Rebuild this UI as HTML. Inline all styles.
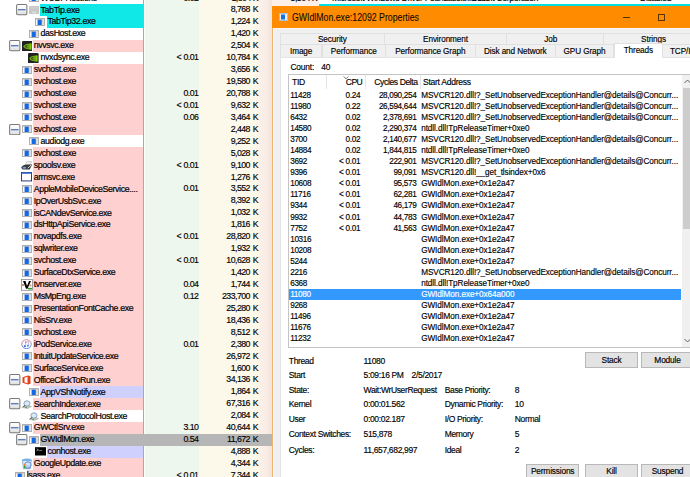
<!DOCTYPE html><html><head><meta charset="utf-8"><style>
html,body{margin:0;padding:0}
body{width:690px;height:477px;overflow:hidden;position:relative;background:#fff;font-family:'Liberation Sans', sans-serif;color:#000}
.a{position:absolute}
svg{display:block}
.t{position:absolute;white-space:nowrap;line-height:1;-webkit-text-stroke:0.15px currentColor}

</style></head><body>
<div class="a" style="left:143.5px;top:0;width:55.5px;height:477px;background:#eef7ee"></div>
<div class="a" style="left:143px;top:0;width:1px;height:477px;background:#a9a9a9"></div>
<div class="a" style="left:144px;top:0;width:1px;height:477px;background:#fbfffb"></div>
<div class="a" style="left:199px;top:0;width:60px;height:477px;background:#fdf9ea"></div>
<div class="a" style="left:259px;top:0;width:60px;height:477px;background:linear-gradient(to right,#fcf0e8 0px,#f9ece4 8px,#f1e3dc 13px,#fcf0e8 13px)"></div>
<div class="a" style="left:28.5px;top:-5.94px;line-height:0"><svg preserveAspectRatio="none" width="10" height="8" viewBox="0 0 10 8"><rect x="0.5" y="0.5" width="9" height="7" fill="#f8f8f8" stroke="#b0b0b0"/><rect x="1" y="1" width="8" height="0.8" fill="#dccab8"/><rect x="2.6" y="1.6" width="4.2" height="5.4" fill="#1468e0"/><rect x="7.2" y="1.8" width="1.4" height="5" fill="#cfcfcf"/></svg></div>
<div class="t" style="left:40.50px;top:-5.59px;font-size:8.8px;color:#000;letter-spacing:-0.38px;">WUDFHost.exe</div>
<div class="t" style="right:491.65px;top:-5.59px;font-size:8.8px;color:#000;text-align:right;letter-spacing:-0.55px;">0.02</div>
<div class="t" style="right:432.05px;top:-5.59px;font-size:8.8px;color:#000;text-align:right;letter-spacing:-0.55px;">1,804 K</div>
<div class="a" style="left:40.30px;top:4px;width:102.70px;height:12px;background:#10e8e8"></div>
<div class="a" style="left:16.10px;top:4.30px;line-height:0"><svg width="11.5" height="11.4" viewBox="0 0 12 12"><defs><linearGradient id="bg" x1="0" y1="0" x2="0" y2="1"><stop offset="0" stop-color="#ffffff"/><stop offset="0.5" stop-color="#f4f4f4"/><stop offset="1" stop-color="#dcdcdc"/></linearGradient></defs><rect x="0.6" y="0.6" width="10.8" height="10.8" rx="1.2" fill="url(#bg)" stroke="#7a7a7a" stroke-width="1.1"/><rect x="2" y="5.4" width="8" height="1.3" fill="#4a6fb0"/></svg></div>
<div class="a" style="left:28.70px;top:6.10px;line-height:0"><svg preserveAspectRatio="none" width="10.3" height="7.9" viewBox="0 0 10 8"><rect x="0" y="0" width="10" height="8" fill="#c4c4c4"/><rect x="0.8" y="0.8" width="8.4" height="2" fill="#d0d0d0"/><rect x="0.8" y="3.4" width="8.4" height="2" fill="#cacaca"/><rect x="3" y="5.8" width="4" height="1.4" fill="#e0e0e0"/></svg></div>
<div class="t" style="left:40.60px;top:5.55px;font-size:8.8px;color:#000;letter-spacing:-0.38px;-webkit-text-stroke:0.2px #000">TabTip.exe</div>
<div class="t" style="right:432.05px;top:5.35px;font-size:8.8px;color:#000;text-align:right;letter-spacing:-0.55px;">8,768 <span style="margin-left:0.8px">K</span></div>
<div class="a" style="left:47.20px;top:16px;width:95.80px;height:12px;background:#10e8e8"></div>
<div class="a" style="left:35.40px;top:17.94px;line-height:0"><svg preserveAspectRatio="none" width="10" height="8" viewBox="0 0 10 8"><rect x="0.5" y="0.5" width="9" height="7" fill="#f8f8f8" stroke="#b0b0b0"/><rect x="1" y="1" width="8" height="0.8" fill="#dccab8"/><rect x="2.6" y="1.6" width="4.2" height="5.4" fill="#1468e0"/><rect x="7.2" y="1.8" width="1.4" height="5" fill="#cfcfcf"/></svg></div>
<div class="t" style="left:47.50px;top:17.49px;font-size:8.8px;color:#000;letter-spacing:-0.38px;-webkit-text-stroke:0.2px #000">TabTip32.exe</div>
<div class="t" style="right:432.05px;top:17.29px;font-size:8.8px;color:#000;text-align:right;letter-spacing:-0.55px;">1,224 <span style="margin-left:0.8px">K</span></div>
<div class="a" style="left:28.50px;top:29.88px;line-height:0"><svg preserveAspectRatio="none" width="10" height="8" viewBox="0 0 10 8"><rect x="0.5" y="0.5" width="9" height="7" fill="#f8f8f8" stroke="#b0b0b0"/><rect x="1" y="1" width="8" height="0.8" fill="#dccab8"/><rect x="2.6" y="1.6" width="4.2" height="5.4" fill="#1468e0"/><rect x="7.2" y="1.8" width="1.4" height="5" fill="#cfcfcf"/></svg></div>
<div class="t" style="left:40.60px;top:29.43px;font-size:8.8px;color:#000;letter-spacing:-0.38px;-webkit-text-stroke:0.2px #000">dasHost.exe</div>
<div class="t" style="right:432.05px;top:29.23px;font-size:8.8px;color:#000;text-align:right;letter-spacing:-0.55px;">1,420 <span style="margin-left:0.8px">K</span></div>
<div class="a" style="left:33.40px;top:40px;width:109.60px;height:12px;background:#ffd0d0"></div>
<div class="a" style="left:9.20px;top:40.12px;line-height:0"><svg width="11.5" height="11.4" viewBox="0 0 12 12"><defs><linearGradient id="bg" x1="0" y1="0" x2="0" y2="1"><stop offset="0" stop-color="#ffffff"/><stop offset="0.5" stop-color="#f4f4f4"/><stop offset="1" stop-color="#dcdcdc"/></linearGradient></defs><rect x="0.6" y="0.6" width="10.8" height="10.8" rx="1.2" fill="url(#bg)" stroke="#7a7a7a" stroke-width="1.1"/><rect x="2" y="5.4" width="8" height="1.3" fill="#4a6fb0"/></svg></div>
<div class="a" style="left:21.50px;top:40.62px;line-height:0"><svg preserveAspectRatio="none" width="10.6" height="10.8" viewBox="0 0 11 11"><rect x="0" y="0" width="11" height="11" rx="1.2" fill="#222"/><path d="M1.2 5.6 C2.5 3.3 5 2.4 9.8 2.6 L9.8 8.6 C5 8.8 2.5 7.8 1.2 5.6Z" fill="#6aa816"/><path d="M3 5.6 C4 4.2 5.5 4 7 4.6 C6 4.4 4.8 4.8 4.4 5.6 C4.8 6.4 6 6.8 7 6.6 C5.5 7.2 4 7 3 5.6Z" fill="#2a3a10"/><path d="M8.2 2.6 L9.8 2.6 L9.8 8.6 L8.2 8.6Z" fill="#86c800"/></svg></div>
<div class="t" style="left:33.70px;top:41.37px;font-size:8.8px;color:#000;letter-spacing:-0.38px;-webkit-text-stroke:0.2px #000">nvvsvc.exe</div>
<div class="t" style="right:432.05px;top:41.17px;font-size:8.8px;color:#000;text-align:right;letter-spacing:-0.55px;">2,504 <span style="margin-left:0.8px">K</span></div>
<div class="a" style="left:28.40px;top:52.56px;line-height:0"><svg preserveAspectRatio="none" width="10.6" height="10.8" viewBox="0 0 11 11"><rect x="0" y="0" width="11" height="11" rx="1.2" fill="#222"/><path d="M1.2 5.6 C2.5 3.3 5 2.4 9.8 2.6 L9.8 8.6 C5 8.8 2.5 7.8 1.2 5.6Z" fill="#6aa816"/><path d="M3 5.6 C4 4.2 5.5 4 7 4.6 C6 4.4 4.8 4.8 4.4 5.6 C4.8 6.4 6 6.8 7 6.6 C5.5 7.2 4 7 3 5.6Z" fill="#2a3a10"/><path d="M8.2 2.6 L9.8 2.6 L9.8 8.6 L8.2 8.6Z" fill="#86c800"/></svg></div>
<div class="t" style="left:40.60px;top:53.31px;font-size:8.8px;color:#000;letter-spacing:-0.38px;-webkit-text-stroke:0.2px #000">nvxdsync.exe</div>
<div class="t" style="right:491.65px;top:53.11px;font-size:8.8px;color:#000;text-align:right;letter-spacing:-0.55px;">&lt;<span style="margin-left:2.4px"></span>0.01</div>
<div class="t" style="right:432.05px;top:53.11px;font-size:8.8px;color:#000;text-align:right;letter-spacing:-0.55px;">10,784 <span style="margin-left:0.8px">K</span></div>
<div class="a" style="left:33.40px;top:64px;width:109.60px;height:12px;background:#ffd0d0"></div>
<div class="a" style="left:21.60px;top:65.70px;line-height:0"><svg preserveAspectRatio="none" width="10" height="8" viewBox="0 0 10 8"><rect x="0.5" y="0.5" width="9" height="7" fill="#f8f8f8" stroke="#b0b0b0"/><rect x="1" y="1" width="8" height="0.8" fill="#dccab8"/><rect x="2.6" y="1.6" width="4.2" height="5.4" fill="#1468e0"/><rect x="7.2" y="1.8" width="1.4" height="5" fill="#cfcfcf"/></svg></div>
<div class="t" style="left:33.70px;top:65.25px;font-size:8.8px;color:#000;letter-spacing:-0.38px;-webkit-text-stroke:0.2px #000">svchost.exe</div>
<div class="t" style="right:432.05px;top:65.05px;font-size:8.8px;color:#000;text-align:right;letter-spacing:-0.55px;">3,656 <span style="margin-left:0.8px">K</span></div>
<div class="a" style="left:33.40px;top:76px;width:109.60px;height:12px;background:#ffd0d0"></div>
<div class="a" style="left:21.60px;top:77.64px;line-height:0"><svg preserveAspectRatio="none" width="10" height="8" viewBox="0 0 10 8"><rect x="0.5" y="0.5" width="9" height="7" fill="#f8f8f8" stroke="#b0b0b0"/><rect x="1" y="1" width="8" height="0.8" fill="#dccab8"/><rect x="2.6" y="1.6" width="4.2" height="5.4" fill="#1468e0"/><rect x="7.2" y="1.8" width="1.4" height="5" fill="#cfcfcf"/></svg></div>
<div class="t" style="left:33.70px;top:77.19px;font-size:8.8px;color:#000;letter-spacing:-0.38px;-webkit-text-stroke:0.2px #000">svchost.exe</div>
<div class="t" style="right:432.05px;top:76.99px;font-size:8.8px;color:#000;text-align:right;letter-spacing:-0.55px;">19,580 <span style="margin-left:0.8px">K</span></div>
<div class="a" style="left:33.40px;top:88px;width:109.60px;height:12px;background:#ffd0d0"></div>
<div class="a" style="left:21.60px;top:89.58px;line-height:0"><svg preserveAspectRatio="none" width="10" height="8" viewBox="0 0 10 8"><rect x="0.5" y="0.5" width="9" height="7" fill="#f8f8f8" stroke="#b0b0b0"/><rect x="1" y="1" width="8" height="0.8" fill="#dccab8"/><rect x="2.6" y="1.6" width="4.2" height="5.4" fill="#1468e0"/><rect x="7.2" y="1.8" width="1.4" height="5" fill="#cfcfcf"/></svg></div>
<div class="t" style="left:33.70px;top:89.13px;font-size:8.8px;color:#000;letter-spacing:-0.38px;-webkit-text-stroke:0.2px #000">svchost.exe</div>
<div class="t" style="right:491.65px;top:88.93px;font-size:8.8px;color:#000;text-align:right;letter-spacing:-0.55px;">0.01</div>
<div class="t" style="right:432.05px;top:88.93px;font-size:8.8px;color:#000;text-align:right;letter-spacing:-0.55px;">20,788 <span style="margin-left:0.8px">K</span></div>
<div class="a" style="left:33.40px;top:100px;width:109.60px;height:11px;background:#ffd0d0"></div>
<div class="a" style="left:21.60px;top:101.52px;line-height:0"><svg preserveAspectRatio="none" width="10" height="8" viewBox="0 0 10 8"><rect x="0.5" y="0.5" width="9" height="7" fill="#f8f8f8" stroke="#b0b0b0"/><rect x="1" y="1" width="8" height="0.8" fill="#dccab8"/><rect x="2.6" y="1.6" width="4.2" height="5.4" fill="#1468e0"/><rect x="7.2" y="1.8" width="1.4" height="5" fill="#cfcfcf"/></svg></div>
<div class="t" style="left:33.70px;top:101.07px;font-size:8.8px;color:#000;letter-spacing:-0.38px;-webkit-text-stroke:0.2px #000">svchost.exe</div>
<div class="t" style="right:491.65px;top:100.87px;font-size:8.8px;color:#000;text-align:right;letter-spacing:-0.55px;">&lt;<span style="margin-left:2.4px"></span>0.01</div>
<div class="t" style="right:432.05px;top:100.87px;font-size:8.8px;color:#000;text-align:right;letter-spacing:-0.55px;">9,632 <span style="margin-left:0.8px">K</span></div>
<div class="a" style="left:33.40px;top:111px;width:109.60px;height:12px;background:#ffd0d0"></div>
<div class="a" style="left:21.60px;top:113.46px;line-height:0"><svg preserveAspectRatio="none" width="10" height="8" viewBox="0 0 10 8"><rect x="0.5" y="0.5" width="9" height="7" fill="#f8f8f8" stroke="#b0b0b0"/><rect x="1" y="1" width="8" height="0.8" fill="#dccab8"/><rect x="2.6" y="1.6" width="4.2" height="5.4" fill="#1468e0"/><rect x="7.2" y="1.8" width="1.4" height="5" fill="#cfcfcf"/></svg></div>
<div class="t" style="left:33.70px;top:113.01px;font-size:8.8px;color:#000;letter-spacing:-0.38px;-webkit-text-stroke:0.2px #000">svchost.exe</div>
<div class="t" style="right:491.65px;top:112.81px;font-size:8.8px;color:#000;text-align:right;letter-spacing:-0.55px;">0.06</div>
<div class="t" style="right:432.05px;top:112.81px;font-size:8.8px;color:#000;text-align:right;letter-spacing:-0.55px;">3,464 <span style="margin-left:0.8px">K</span></div>
<div class="a" style="left:33.40px;top:123px;width:109.60px;height:12px;background:#ffd0d0"></div>
<div class="a" style="left:9.20px;top:123.70px;line-height:0"><svg width="11.5" height="11.4" viewBox="0 0 12 12"><defs><linearGradient id="bg" x1="0" y1="0" x2="0" y2="1"><stop offset="0" stop-color="#ffffff"/><stop offset="0.5" stop-color="#f4f4f4"/><stop offset="1" stop-color="#dcdcdc"/></linearGradient></defs><rect x="0.6" y="0.6" width="10.8" height="10.8" rx="1.2" fill="url(#bg)" stroke="#7a7a7a" stroke-width="1.1"/><rect x="2" y="5.4" width="8" height="1.3" fill="#4a6fb0"/></svg></div>
<div class="a" style="left:21.60px;top:125.40px;line-height:0"><svg preserveAspectRatio="none" width="10" height="8" viewBox="0 0 10 8"><rect x="0.5" y="0.5" width="9" height="7" fill="#f8f8f8" stroke="#b0b0b0"/><rect x="1" y="1" width="8" height="0.8" fill="#dccab8"/><rect x="2.6" y="1.6" width="4.2" height="5.4" fill="#1468e0"/><rect x="7.2" y="1.8" width="1.4" height="5" fill="#cfcfcf"/></svg></div>
<div class="t" style="left:33.70px;top:124.95px;font-size:8.8px;color:#000;letter-spacing:-0.38px;-webkit-text-stroke:0.2px #000">svchost.exe</div>
<div class="t" style="right:432.05px;top:124.75px;font-size:8.8px;color:#000;text-align:right;letter-spacing:-0.55px;">2,448 <span style="margin-left:0.8px">K</span></div>
<div class="a" style="left:28.50px;top:137.34px;line-height:0"><svg preserveAspectRatio="none" width="10" height="8" viewBox="0 0 10 8"><rect x="0.5" y="0.5" width="9" height="7" fill="#f8f8f8" stroke="#b0b0b0"/><rect x="1" y="1" width="8" height="0.8" fill="#dccab8"/><rect x="2.6" y="1.6" width="4.2" height="5.4" fill="#1468e0"/><rect x="7.2" y="1.8" width="1.4" height="5" fill="#cfcfcf"/></svg></div>
<div class="t" style="left:40.60px;top:136.89px;font-size:8.8px;color:#000;letter-spacing:-0.38px;-webkit-text-stroke:0.2px #000">audiodg.exe</div>
<div class="t" style="right:432.05px;top:136.69px;font-size:8.8px;color:#000;text-align:right;letter-spacing:-0.55px;">9,252 <span style="margin-left:0.8px">K</span></div>
<div class="a" style="left:33.40px;top:147px;width:109.60px;height:12px;background:#ffd0d0"></div>
<div class="a" style="left:21.60px;top:149.28px;line-height:0"><svg preserveAspectRatio="none" width="10" height="8" viewBox="0 0 10 8"><rect x="0.5" y="0.5" width="9" height="7" fill="#f8f8f8" stroke="#b0b0b0"/><rect x="1" y="1" width="8" height="0.8" fill="#dccab8"/><rect x="2.6" y="1.6" width="4.2" height="5.4" fill="#1468e0"/><rect x="7.2" y="1.8" width="1.4" height="5" fill="#cfcfcf"/></svg></div>
<div class="t" style="left:33.70px;top:148.83px;font-size:8.8px;color:#000;letter-spacing:-0.38px;-webkit-text-stroke:0.2px #000">svchost.exe</div>
<div class="t" style="right:432.05px;top:148.63px;font-size:8.8px;color:#000;text-align:right;letter-spacing:-0.55px;">5,028 <span style="margin-left:0.8px">K</span></div>
<div class="a" style="left:33.40px;top:159px;width:109.60px;height:12px;background:#ffd0d0"></div>
<div class="a" style="left:21.00px;top:161.02px;line-height:0"><svg preserveAspectRatio="none" width="11.6" height="9" viewBox="0 0 12 10"><path d="M6 0.5 L11 0.5 L9 5 L4 5Z" fill="#f0f0f0" stroke="#b0b0b0" stroke-width="0.6"/><path d="M0.5 7 Q2 4 6 4 L11.5 4 L9 9.5 L2 9.5 Q0.5 9 0.5 7Z" fill="#3a3a3a"/><ellipse cx="3.5" cy="7.5" rx="2" ry="1.2" fill="#6aa0e0"/><path d="M7 8 L10.5 4.5" stroke="#e0e0e0" stroke-width="1"/></svg></div>
<div class="t" style="left:33.70px;top:160.77px;font-size:8.8px;color:#000;letter-spacing:-0.38px;-webkit-text-stroke:0.2px #000">spoolsv.exe</div>
<div class="t" style="right:491.65px;top:160.57px;font-size:8.8px;color:#000;text-align:right;letter-spacing:-0.55px;">&lt;<span style="margin-left:2.4px"></span>0.01</div>
<div class="t" style="right:432.05px;top:160.57px;font-size:8.8px;color:#000;text-align:right;letter-spacing:-0.55px;">9,100 <span style="margin-left:0.8px">K</span></div>
<div class="a" style="left:33.40px;top:171px;width:109.60px;height:12px;background:#ffd0d0"></div>
<div class="a" style="left:21.10px;top:172.26px;line-height:0"><svg preserveAspectRatio="none" width="11" height="9.4" viewBox="0 0 12 10"><rect x="0.5" y="0.5" width="11" height="9" fill="#fff" stroke="#1c2f6e" stroke-width="1"/><rect x="0.5" y="0.5" width="11" height="1.5" fill="#3d78d8"/></svg></div>
<div class="t" style="left:33.70px;top:172.71px;font-size:8.8px;color:#000;letter-spacing:-0.38px;-webkit-text-stroke:0.2px #000">armsvc.exe</div>
<div class="t" style="right:432.05px;top:172.51px;font-size:8.8px;color:#000;text-align:right;letter-spacing:-0.55px;">1,276 <span style="margin-left:0.8px">K</span></div>
<div class="a" style="left:33.40px;top:183px;width:109.60px;height:12px;background:#ffd0d0"></div>
<div class="a" style="left:21.60px;top:185.10px;line-height:0"><svg preserveAspectRatio="none" width="10" height="8" viewBox="0 0 10 8"><rect x="0.5" y="0.5" width="9" height="7" fill="#f8f8f8" stroke="#b0b0b0"/><rect x="1" y="1" width="8" height="0.8" fill="#dccab8"/><rect x="2.6" y="1.6" width="4.2" height="5.4" fill="#1468e0"/><rect x="7.2" y="1.8" width="1.4" height="5" fill="#cfcfcf"/></svg></div>
<div class="t" style="left:33.70px;top:184.65px;font-size:8.8px;color:#000;letter-spacing:-0.38px;-webkit-text-stroke:0.2px #000">AppleMobileDeviceService....</div>
<div class="t" style="right:491.65px;top:184.45px;font-size:8.8px;color:#000;text-align:right;letter-spacing:-0.55px;">0.01</div>
<div class="t" style="right:432.05px;top:184.45px;font-size:8.8px;color:#000;text-align:right;letter-spacing:-0.55px;">3,552 <span style="margin-left:0.8px">K</span></div>
<div class="a" style="left:33.40px;top:195px;width:109.60px;height:12px;background:#ffd0d0"></div>
<div class="a" style="left:21.60px;top:197.04px;line-height:0"><svg preserveAspectRatio="none" width="10" height="8" viewBox="0 0 10 8"><rect x="0.5" y="0.5" width="9" height="7" fill="#f8f8f8" stroke="#b0b0b0"/><rect x="1" y="1" width="8" height="0.8" fill="#dccab8"/><rect x="2.6" y="1.6" width="4.2" height="5.4" fill="#1468e0"/><rect x="7.2" y="1.8" width="1.4" height="5" fill="#cfcfcf"/></svg></div>
<div class="t" style="left:33.70px;top:196.59px;font-size:8.8px;color:#000;letter-spacing:-0.38px;-webkit-text-stroke:0.2px #000">IpOverUsbSvc.exe</div>
<div class="t" style="right:432.05px;top:196.39px;font-size:8.8px;color:#000;text-align:right;letter-spacing:-0.55px;">8,392 <span style="margin-left:0.8px">K</span></div>
<div class="a" style="left:33.40px;top:207px;width:109.60px;height:12px;background:#ffd0d0"></div>
<div class="a" style="left:21.60px;top:208.98px;line-height:0"><svg preserveAspectRatio="none" width="10" height="8" viewBox="0 0 10 8"><rect x="0.5" y="0.5" width="9" height="7" fill="#f8f8f8" stroke="#b0b0b0"/><rect x="1" y="1" width="8" height="0.8" fill="#dccab8"/><rect x="2.6" y="1.6" width="4.2" height="5.4" fill="#1468e0"/><rect x="7.2" y="1.8" width="1.4" height="5" fill="#cfcfcf"/></svg></div>
<div class="t" style="left:33.70px;top:208.53px;font-size:8.8px;color:#000;letter-spacing:-0.38px;-webkit-text-stroke:0.2px #000">isCANdevService.exe</div>
<div class="t" style="right:432.05px;top:208.33px;font-size:8.8px;color:#000;text-align:right;letter-spacing:-0.55px;">1,032 <span style="margin-left:0.8px">K</span></div>
<div class="a" style="left:33.40px;top:219px;width:109.60px;height:12px;background:#ffd0d0"></div>
<div class="a" style="left:21.60px;top:220.92px;line-height:0"><svg preserveAspectRatio="none" width="10" height="8" viewBox="0 0 10 8"><rect x="0.5" y="0.5" width="9" height="7" fill="#f8f8f8" stroke="#b0b0b0"/><rect x="1" y="1" width="8" height="0.8" fill="#dccab8"/><rect x="2.6" y="1.6" width="4.2" height="5.4" fill="#1468e0"/><rect x="7.2" y="1.8" width="1.4" height="5" fill="#cfcfcf"/></svg></div>
<div class="t" style="left:33.70px;top:220.47px;font-size:8.8px;color:#000;letter-spacing:-0.38px;-webkit-text-stroke:0.2px #000">dsHttpApiService.exe</div>
<div class="t" style="right:432.05px;top:220.27px;font-size:8.8px;color:#000;text-align:right;letter-spacing:-0.55px;">1,816 <span style="margin-left:0.8px">K</span></div>
<div class="a" style="left:33.40px;top:231px;width:109.60px;height:12px;background:#ffd0d0"></div>
<div class="a" style="left:21.60px;top:232.86px;line-height:0"><svg preserveAspectRatio="none" width="10" height="8" viewBox="0 0 10 8"><rect x="0.5" y="0.5" width="9" height="7" fill="#f8f8f8" stroke="#b0b0b0"/><rect x="1" y="1" width="8" height="0.8" fill="#dccab8"/><rect x="2.6" y="1.6" width="4.2" height="5.4" fill="#1468e0"/><rect x="7.2" y="1.8" width="1.4" height="5" fill="#cfcfcf"/></svg></div>
<div class="t" style="left:33.70px;top:232.41px;font-size:8.8px;color:#000;letter-spacing:-0.38px;-webkit-text-stroke:0.2px #000">novapdfs.exe</div>
<div class="t" style="right:491.65px;top:232.21px;font-size:8.8px;color:#000;text-align:right;letter-spacing:-0.55px;">&lt;<span style="margin-left:2.4px"></span>0.01</div>
<div class="t" style="right:432.05px;top:232.21px;font-size:8.8px;color:#000;text-align:right;letter-spacing:-0.55px;">28,820 <span style="margin-left:0.8px">K</span></div>
<div class="a" style="left:33.40px;top:243px;width:109.60px;height:12px;background:#ffd0d0"></div>
<div class="a" style="left:21.60px;top:244.80px;line-height:0"><svg preserveAspectRatio="none" width="10" height="8" viewBox="0 0 10 8"><rect x="0.5" y="0.5" width="9" height="7" fill="#f8f8f8" stroke="#b0b0b0"/><rect x="1" y="1" width="8" height="0.8" fill="#dccab8"/><rect x="2.6" y="1.6" width="4.2" height="5.4" fill="#1468e0"/><rect x="7.2" y="1.8" width="1.4" height="5" fill="#cfcfcf"/></svg></div>
<div class="t" style="left:33.70px;top:244.35px;font-size:8.8px;color:#000;letter-spacing:-0.38px;-webkit-text-stroke:0.2px #000">sqlwriter.exe</div>
<div class="t" style="right:432.05px;top:244.15px;font-size:8.8px;color:#000;text-align:right;letter-spacing:-0.55px;">1,932 <span style="margin-left:0.8px">K</span></div>
<div class="a" style="left:33.40px;top:255px;width:109.60px;height:12px;background:#ffd0d0"></div>
<div class="a" style="left:21.60px;top:256.74px;line-height:0"><svg preserveAspectRatio="none" width="10" height="8" viewBox="0 0 10 8"><rect x="0.5" y="0.5" width="9" height="7" fill="#f8f8f8" stroke="#b0b0b0"/><rect x="1" y="1" width="8" height="0.8" fill="#dccab8"/><rect x="2.6" y="1.6" width="4.2" height="5.4" fill="#1468e0"/><rect x="7.2" y="1.8" width="1.4" height="5" fill="#cfcfcf"/></svg></div>
<div class="t" style="left:33.70px;top:256.29px;font-size:8.8px;color:#000;letter-spacing:-0.38px;-webkit-text-stroke:0.2px #000">svchost.exe</div>
<div class="t" style="right:491.65px;top:256.09px;font-size:8.8px;color:#000;text-align:right;letter-spacing:-0.55px;">&lt;<span style="margin-left:2.4px"></span>0.01</div>
<div class="t" style="right:432.05px;top:256.09px;font-size:8.8px;color:#000;text-align:right;letter-spacing:-0.55px;">10,628 <span style="margin-left:0.8px">K</span></div>
<div class="a" style="left:33.40px;top:267px;width:109.60px;height:12px;background:#ffd0d0"></div>
<div class="a" style="left:21.60px;top:268.68px;line-height:0"><svg preserveAspectRatio="none" width="10" height="8" viewBox="0 0 10 8"><rect x="0.5" y="0.5" width="9" height="7" fill="#f8f8f8" stroke="#b0b0b0"/><rect x="1" y="1" width="8" height="0.8" fill="#dccab8"/><rect x="2.6" y="1.6" width="4.2" height="5.4" fill="#1468e0"/><rect x="7.2" y="1.8" width="1.4" height="5" fill="#cfcfcf"/></svg></div>
<div class="t" style="left:33.70px;top:268.23px;font-size:8.8px;color:#000;letter-spacing:-0.38px;-webkit-text-stroke:0.2px #000">SurfaceDtxService.exe</div>
<div class="t" style="right:432.05px;top:268.03px;font-size:8.8px;color:#000;text-align:right;letter-spacing:-0.55px;">1,420 <span style="margin-left:0.8px">K</span></div>
<div class="a" style="left:33.40px;top:279px;width:109.60px;height:12px;background:#ffd0d0"></div>
<div class="a" style="left:20.70px;top:278.72px;line-height:0"><svg preserveAspectRatio="none" width="12" height="11.8" viewBox="0 0 12 12"><rect x="0.5" y="0.5" width="11" height="11" fill="#fff" stroke="#888" stroke-width="0.8"/><path d="M2 2 L4.5 2 L6 7 L8 2 L10 2 L6.5 10 L5 10Z" fill="#000"/><circle cx="2" cy="6" r="1" fill="#b07040"/><circle cx="9.5" cy="6.5" r="0.9" fill="#c08050"/><rect x="7" y="9" width="4" height="1.6" fill="#2a9a2a"/></svg></div>
<div class="t" style="left:33.70px;top:280.17px;font-size:8.8px;color:#000;letter-spacing:-0.38px;-webkit-text-stroke:0.2px #000">tvnserver.exe</div>
<div class="t" style="right:491.65px;top:279.97px;font-size:8.8px;color:#000;text-align:right;letter-spacing:-0.55px;">0.04</div>
<div class="t" style="right:432.05px;top:279.97px;font-size:8.8px;color:#000;text-align:right;letter-spacing:-0.55px;">1,744 <span style="margin-left:0.8px">K</span></div>
<div class="a" style="left:33.40px;top:291px;width:109.60px;height:11px;background:#ffd0d0"></div>
<div class="a" style="left:21.60px;top:292.56px;line-height:0"><svg preserveAspectRatio="none" width="10" height="8" viewBox="0 0 10 8"><rect x="0.5" y="0.5" width="9" height="7" fill="#f8f8f8" stroke="#b0b0b0"/><rect x="1" y="1" width="8" height="0.8" fill="#dccab8"/><rect x="2.6" y="1.6" width="4.2" height="5.4" fill="#1468e0"/><rect x="7.2" y="1.8" width="1.4" height="5" fill="#cfcfcf"/></svg></div>
<div class="t" style="left:33.70px;top:292.11px;font-size:8.8px;color:#000;letter-spacing:-0.38px;-webkit-text-stroke:0.2px #000">MsMpEng.exe</div>
<div class="t" style="right:491.65px;top:291.91px;font-size:8.8px;color:#000;text-align:right;letter-spacing:-0.55px;">0.12</div>
<div class="t" style="right:432.05px;top:291.91px;font-size:8.8px;color:#000;text-align:right;letter-spacing:-0.55px;">233,700 <span style="margin-left:0.8px">K</span></div>
<div class="a" style="left:33.40px;top:302px;width:109.60px;height:12px;background:#ffd0d0"></div>
<div class="a" style="left:21.60px;top:304.50px;line-height:0"><svg preserveAspectRatio="none" width="10" height="8" viewBox="0 0 10 8"><rect x="0.5" y="0.5" width="9" height="7" fill="#f8f8f8" stroke="#b0b0b0"/><rect x="1" y="1" width="8" height="0.8" fill="#dccab8"/><rect x="2.6" y="1.6" width="4.2" height="5.4" fill="#1468e0"/><rect x="7.2" y="1.8" width="1.4" height="5" fill="#cfcfcf"/></svg></div>
<div class="t" style="left:33.70px;top:304.05px;font-size:8.8px;color:#000;letter-spacing:-0.38px;-webkit-text-stroke:0.2px #000">PresentationFontCache.exe</div>
<div class="t" style="right:432.05px;top:303.85px;font-size:8.8px;color:#000;text-align:right;letter-spacing:-0.55px;">25,280 <span style="margin-left:0.8px">K</span></div>
<div class="a" style="left:33.40px;top:314px;width:109.60px;height:12px;background:#ffd0d0"></div>
<div class="a" style="left:21.60px;top:316.44px;line-height:0"><svg preserveAspectRatio="none" width="10" height="8" viewBox="0 0 10 8"><rect x="0.5" y="0.5" width="9" height="7" fill="#f8f8f8" stroke="#b0b0b0"/><rect x="1" y="1" width="8" height="0.8" fill="#dccab8"/><rect x="2.6" y="1.6" width="4.2" height="5.4" fill="#1468e0"/><rect x="7.2" y="1.8" width="1.4" height="5" fill="#cfcfcf"/></svg></div>
<div class="t" style="left:33.70px;top:315.99px;font-size:8.8px;color:#000;letter-spacing:-0.38px;-webkit-text-stroke:0.2px #000">NisSrv.exe</div>
<div class="t" style="right:432.05px;top:315.79px;font-size:8.8px;color:#000;text-align:right;letter-spacing:-0.55px;">18,436 <span style="margin-left:0.8px">K</span></div>
<div class="a" style="left:33.40px;top:326px;width:109.60px;height:12px;background:#ffd0d0"></div>
<div class="a" style="left:21.60px;top:328.38px;line-height:0"><svg preserveAspectRatio="none" width="10" height="8" viewBox="0 0 10 8"><rect x="0.5" y="0.5" width="9" height="7" fill="#f8f8f8" stroke="#b0b0b0"/><rect x="1" y="1" width="8" height="0.8" fill="#dccab8"/><rect x="2.6" y="1.6" width="4.2" height="5.4" fill="#1468e0"/><rect x="7.2" y="1.8" width="1.4" height="5" fill="#cfcfcf"/></svg></div>
<div class="t" style="left:33.70px;top:327.93px;font-size:8.8px;color:#000;letter-spacing:-0.38px;-webkit-text-stroke:0.2px #000">svchost.exe</div>
<div class="t" style="right:432.05px;top:327.73px;font-size:8.8px;color:#000;text-align:right;letter-spacing:-0.55px;">8,512 <span style="margin-left:0.8px">K</span></div>
<div class="a" style="left:33.40px;top:338px;width:109.60px;height:12px;background:#ffd0d0"></div>
<div class="a" style="left:20.90px;top:338.92px;line-height:0"><svg preserveAspectRatio="none" width="11" height="10.4" viewBox="0 0 12 12"><defs><linearGradient id="itg" x1="0" y1="0" x2="0" y2="1"><stop offset="0" stop-color="#f07080"/><stop offset="1" stop-color="#4080f0"/></linearGradient></defs><circle cx="6" cy="6" r="5.2" fill="#fbfbfd" stroke="url(#itg)" stroke-width="1"/><path d="M5 8.3 L5 3.6 L8.3 3 L8.3 7.6" stroke="#8090c0" stroke-width="0.6" fill="none"/><circle cx="4.2" cy="8.4" r="1.1" fill="#3060e0"/><circle cx="7.5" cy="7.8" r="1.1" fill="#3090f0"/><circle cx="5.3" cy="3.6" r="0.8" fill="#e04020"/></svg></div>
<div class="t" style="left:33.70px;top:339.87px;font-size:8.8px;color:#000;letter-spacing:-0.38px;-webkit-text-stroke:0.2px #000">iPodService.exe</div>
<div class="t" style="right:491.65px;top:339.67px;font-size:8.8px;color:#000;text-align:right;letter-spacing:-0.55px;">0.01</div>
<div class="t" style="right:432.05px;top:339.67px;font-size:8.8px;color:#000;text-align:right;letter-spacing:-0.55px;">2,380 <span style="margin-left:0.8px">K</span></div>
<div class="a" style="left:33.40px;top:350px;width:109.60px;height:12px;background:#ffd0d0"></div>
<div class="a" style="left:21.60px;top:352.26px;line-height:0"><svg preserveAspectRatio="none" width="10" height="8" viewBox="0 0 10 8"><rect x="0.5" y="0.5" width="9" height="7" fill="#f8f8f8" stroke="#b0b0b0"/><rect x="1" y="1" width="8" height="0.8" fill="#dccab8"/><rect x="2.6" y="1.6" width="4.2" height="5.4" fill="#1468e0"/><rect x="7.2" y="1.8" width="1.4" height="5" fill="#cfcfcf"/></svg></div>
<div class="t" style="left:33.70px;top:351.81px;font-size:8.8px;color:#000;letter-spacing:-0.38px;-webkit-text-stroke:0.2px #000">IntuitUpdateService.exe</div>
<div class="t" style="right:432.05px;top:351.61px;font-size:8.8px;color:#000;text-align:right;letter-spacing:-0.55px;">26,972 <span style="margin-left:0.8px">K</span></div>
<div class="a" style="left:33.40px;top:362px;width:109.60px;height:12px;background:#ffd0d0"></div>
<div class="a" style="left:21.60px;top:364.20px;line-height:0"><svg preserveAspectRatio="none" width="10" height="8" viewBox="0 0 10 8"><rect x="0.5" y="0.5" width="9" height="7" fill="#f8f8f8" stroke="#b0b0b0"/><rect x="1" y="1" width="8" height="0.8" fill="#dccab8"/><rect x="2.6" y="1.6" width="4.2" height="5.4" fill="#1468e0"/><rect x="7.2" y="1.8" width="1.4" height="5" fill="#cfcfcf"/></svg></div>
<div class="t" style="left:33.70px;top:363.75px;font-size:8.8px;color:#000;letter-spacing:-0.38px;-webkit-text-stroke:0.2px #000">SurfaceService.exe</div>
<div class="t" style="right:432.05px;top:363.55px;font-size:8.8px;color:#000;text-align:right;letter-spacing:-0.55px;">1,600 <span style="margin-left:0.8px">K</span></div>
<div class="a" style="left:33.40px;top:374px;width:109.60px;height:12px;background:#ffd0d0"></div>
<div class="a" style="left:9.20px;top:374.44px;line-height:0"><svg width="11.5" height="11.4" viewBox="0 0 12 12"><defs><linearGradient id="bg" x1="0" y1="0" x2="0" y2="1"><stop offset="0" stop-color="#ffffff"/><stop offset="0.5" stop-color="#f4f4f4"/><stop offset="1" stop-color="#dcdcdc"/></linearGradient></defs><rect x="0.6" y="0.6" width="10.8" height="10.8" rx="1.2" fill="url(#bg)" stroke="#7a7a7a" stroke-width="1.1"/><rect x="2" y="5.4" width="8" height="1.3" fill="#4a6fb0"/></svg></div>
<div class="a" style="left:22.10px;top:375.24px;line-height:0"><svg preserveAspectRatio="none" width="9" height="10" viewBox="0 0 9 11"><path d="M0.5 2.5 L6 0.5 L8.5 1.5 L8.5 9.5 L6 10.5 L0.5 8.5Z" fill="#e8401a"/><path d="M2.5 3 L5.5 2 L5.5 9 L2.5 8Z" fill="#fff"/></svg></div>
<div class="t" style="left:33.70px;top:375.69px;font-size:8.8px;color:#000;letter-spacing:-0.38px;-webkit-text-stroke:0.2px #000">OfficeClickToRun.exe</div>
<div class="t" style="right:432.05px;top:375.49px;font-size:8.8px;color:#000;text-align:right;letter-spacing:-0.55px;">34,136 <span style="margin-left:0.8px">K</span></div>
<div class="a" style="left:40.30px;top:386px;width:102.70px;height:12px;background:#d0d0ff"></div>
<div class="a" style="left:28.50px;top:388.08px;line-height:0"><svg preserveAspectRatio="none" width="10" height="8" viewBox="0 0 10 8"><rect x="0.5" y="0.5" width="9" height="7" fill="#f8f8f8" stroke="#b0b0b0"/><rect x="1" y="1" width="8" height="0.8" fill="#dccab8"/><rect x="2.6" y="1.6" width="4.2" height="5.4" fill="#1468e0"/><rect x="7.2" y="1.8" width="1.4" height="5" fill="#cfcfcf"/></svg></div>
<div class="t" style="left:40.60px;top:387.63px;font-size:8.8px;color:#000;letter-spacing:-0.38px;-webkit-text-stroke:0.2px #000">AppVShNotify.exe</div>
<div class="t" style="right:432.05px;top:387.43px;font-size:8.8px;color:#000;text-align:right;letter-spacing:-0.55px;">1,864 <span style="margin-left:0.8px">K</span></div>
<div class="a" style="left:33.40px;top:398px;width:109.60px;height:12px;background:#ffd0d0"></div>
<div class="a" style="left:9.20px;top:398.32px;line-height:0"><svg width="11.5" height="11.4" viewBox="0 0 12 12"><defs><linearGradient id="bg" x1="0" y1="0" x2="0" y2="1"><stop offset="0" stop-color="#ffffff"/><stop offset="0.5" stop-color="#f4f4f4"/><stop offset="1" stop-color="#dcdcdc"/></linearGradient></defs><rect x="0.6" y="0.6" width="10.8" height="10.8" rx="1.2" fill="url(#bg)" stroke="#7a7a7a" stroke-width="1.1"/><rect x="2" y="5.4" width="8" height="1.3" fill="#4a6fb0"/></svg></div>
<div class="a" style="left:21.10px;top:399.92px;line-height:0"><svg preserveAspectRatio="none" width="11" height="9" viewBox="0 0 12 11"><path d="M1 9 L6 6 L11.5 8 L7 10.5Z" fill="#c8c8c8" stroke="#909090" stroke-width="0.5"/><circle cx="6.5" cy="4.3" r="3.3" fill="#dbe9f5" stroke="#7090b0" stroke-width="0.9"/><path d="M4.5 6.5 L2.5 8.5" stroke="#606060" stroke-width="1.2"/><circle cx="5.5" cy="9" r="0.9" fill="#20a020"/></svg></div>
<div class="t" style="left:33.70px;top:399.57px;font-size:8.8px;color:#000;letter-spacing:-0.38px;-webkit-text-stroke:0.2px #000">SearchIndexer.exe</div>
<div class="t" style="right:432.05px;top:399.37px;font-size:8.8px;color:#000;text-align:right;letter-spacing:-0.55px;">67,316 <span style="margin-left:0.8px">K</span></div>
<div class="a" style="left:28.00px;top:411.86px;line-height:0"><svg preserveAspectRatio="none" width="11" height="9" viewBox="0 0 12 11"><path d="M1 9 L6 6 L11.5 8 L7 10.5Z" fill="#c8c8c8" stroke="#909090" stroke-width="0.5"/><circle cx="6.5" cy="4.3" r="3.3" fill="#dbe9f5" stroke="#7090b0" stroke-width="0.9"/><path d="M4.5 6.5 L2.5 8.5" stroke="#606060" stroke-width="1.2"/><circle cx="5.5" cy="9" r="0.9" fill="#20a020"/></svg></div>
<div class="t" style="left:40.60px;top:411.51px;font-size:8.8px;color:#000;letter-spacing:-0.38px;-webkit-text-stroke:0.2px #000">SearchProtocolHost.exe</div>
<div class="t" style="right:432.05px;top:411.31px;font-size:8.8px;color:#000;text-align:right;letter-spacing:-0.55px;">2,084 <span style="margin-left:0.8px">K</span></div>
<div class="a" style="left:33.40px;top:422px;width:109.60px;height:12px;background:#ffd0d0"></div>
<div class="a" style="left:9.20px;top:422.20px;line-height:0"><svg width="11.5" height="11.4" viewBox="0 0 12 12"><defs><linearGradient id="bg" x1="0" y1="0" x2="0" y2="1"><stop offset="0" stop-color="#ffffff"/><stop offset="0.5" stop-color="#f4f4f4"/><stop offset="1" stop-color="#dcdcdc"/></linearGradient></defs><rect x="0.6" y="0.6" width="10.8" height="10.8" rx="1.2" fill="url(#bg)" stroke="#7a7a7a" stroke-width="1.1"/><rect x="2" y="5.4" width="8" height="1.3" fill="#4a6fb0"/></svg></div>
<div class="a" style="left:21.60px;top:423.90px;line-height:0"><svg preserveAspectRatio="none" width="10" height="8" viewBox="0 0 10 8"><rect x="0.5" y="0.5" width="9" height="7" fill="#f8f8f8" stroke="#b0b0b0"/><rect x="1" y="1" width="8" height="0.8" fill="#dccab8"/><rect x="2.6" y="1.6" width="4.2" height="5.4" fill="#1468e0"/><rect x="7.2" y="1.8" width="1.4" height="5" fill="#cfcfcf"/></svg></div>
<div class="t" style="left:33.70px;top:423.45px;font-size:8.8px;color:#000;letter-spacing:-0.38px;-webkit-text-stroke:0.2px #000">GWCtlSrv.exe</div>
<div class="t" style="right:491.65px;top:423.25px;font-size:8.8px;color:#000;text-align:right;letter-spacing:-0.55px;">3.10</div>
<div class="t" style="right:432.05px;top:423.25px;font-size:8.8px;color:#000;text-align:right;letter-spacing:-0.55px;">40,644 <span style="margin-left:0.8px">K</span></div>
<div class="a" style="left:40.30px;top:434px;width:231.70px;height:12px;background:#b6b6b6"></div>
<div class="a" style="left:16.10px;top:434.14px;line-height:0"><svg width="11.5" height="11.4" viewBox="0 0 12 12"><defs><linearGradient id="bg" x1="0" y1="0" x2="0" y2="1"><stop offset="0" stop-color="#ffffff"/><stop offset="0.5" stop-color="#f4f4f4"/><stop offset="1" stop-color="#dcdcdc"/></linearGradient></defs><rect x="0.6" y="0.6" width="10.8" height="10.8" rx="1.2" fill="url(#bg)" stroke="#7a7a7a" stroke-width="1.1"/><rect x="2" y="5.4" width="8" height="1.3" fill="#4a6fb0"/></svg></div>
<div class="a" style="left:28.50px;top:435.84px;line-height:0"><svg preserveAspectRatio="none" width="10" height="8" viewBox="0 0 10 8"><rect x="0.5" y="0.5" width="9" height="7" fill="#f8f8f8" stroke="#b0b0b0"/><rect x="1" y="1" width="8" height="0.8" fill="#dccab8"/><rect x="2.6" y="1.6" width="4.2" height="5.4" fill="#1468e0"/><rect x="7.2" y="1.8" width="1.4" height="5" fill="#cfcfcf"/></svg></div>
<div class="t" style="left:40.60px;top:435.39px;font-size:8.8px;color:#000;letter-spacing:-0.38px;-webkit-text-stroke:0.2px #000">GWIdlMon.exe</div>
<div class="t" style="right:491.65px;top:435.19px;font-size:8.8px;color:#000;text-align:right;letter-spacing:-0.55px;">0.54</div>
<div class="t" style="right:432.05px;top:435.19px;font-size:8.8px;color:#000;text-align:right;letter-spacing:-0.55px;">11,672 <span style="margin-left:0.8px">K</span></div>
<div class="a" style="left:47.20px;top:446px;width:95.80px;height:12px;background:#d0d0ff"></div>
<div class="a" style="left:34.80px;top:447.38px;line-height:0"><svg preserveAspectRatio="none" width="11.2" height="8.5" viewBox="0 0 11 9"><rect x="0" y="0" width="11" height="9" fill="#000"/><rect x="0" y="0" width="11" height="1" fill="#303030"/><path d="M1.5 2 L3.5 3 L1.5 4" stroke="#c0c0c0" stroke-width="0.7" fill="none"/><rect x="4" y="3.5" width="3" height="0.7" fill="#a0a0a0"/></svg></div>
<div class="t" style="left:47.50px;top:447.33px;font-size:8.8px;color:#000;letter-spacing:-0.38px;-webkit-text-stroke:0.2px #000">conhost.exe</div>
<div class="t" style="right:432.05px;top:447.13px;font-size:8.8px;color:#000;text-align:right;letter-spacing:-0.55px;">4,888 <span style="margin-left:0.8px">K</span></div>
<div class="a" style="left:33.40px;top:458px;width:109.60px;height:12px;background:#ffd0d0"></div>
<div class="a" style="left:21.00px;top:457.82px;line-height:0"><svg preserveAspectRatio="none" width="11.7" height="11.7" viewBox="0 0 12 12"><path d="M1.5 2.5 L10.5 2.5 L9.5 11 L2.5 11Z" fill="#e8f2fc" stroke="#5a8ac8" stroke-width="0.7"/><path d="M1 1.5 Q6 -0.5 11 1.5 L10.5 3 L1.5 3Z" fill="#7ab0e8"/><circle cx="7" cy="7.2" r="3.4" fill="#b8d0f4" stroke="#3a68b8" stroke-width="0.7"/><path d="M5 5.5 Q7 7 9.5 6" stroke="#ffffff" stroke-width="0.8" fill="none"/><rect x="3" y="6" width="1.3" height="2" fill="#f08020"/><rect x="3" y="8" width="1.3" height="2.5" fill="#30a030"/></svg></div>
<div class="t" style="left:33.70px;top:459.27px;font-size:8.8px;color:#000;letter-spacing:-0.38px;-webkit-text-stroke:0.2px #000">GoogleUpdate.exe</div>
<div class="t" style="right:432.05px;top:459.07px;font-size:8.8px;color:#000;text-align:right;letter-spacing:-0.55px;">4,344 <span style="margin-left:0.8px">K</span></div>
<div class="a" style="left:26.50px;top:470px;width:116.50px;height:12px;background:#ffd0d0"></div>
<div class="a" style="left:14.70px;top:471.66px;line-height:0"><svg preserveAspectRatio="none" width="10" height="8" viewBox="0 0 10 8"><rect x="0.5" y="0.5" width="9" height="7" fill="#f8f8f8" stroke="#b0b0b0"/><rect x="1" y="1" width="8" height="0.8" fill="#dccab8"/><rect x="2.6" y="1.6" width="4.2" height="5.4" fill="#1468e0"/><rect x="7.2" y="1.8" width="1.4" height="5" fill="#cfcfcf"/></svg></div>
<div class="t" style="left:26.80px;top:471.21px;font-size:8.8px;color:#000;letter-spacing:-0.38px;-webkit-text-stroke:0.2px #000">lsass.exe</div>
<div class="t" style="right:491.65px;top:471.01px;font-size:8.8px;color:#000;text-align:right;letter-spacing:-0.55px;">&lt;<span style="margin-left:2.4px"></span>0.01</div>
<div class="t" style="right:432.05px;top:471.01px;font-size:8.8px;color:#000;text-align:right;letter-spacing:-0.55px;">7,344 <span style="margin-left:0.8px">K</span></div>
<div class="t" style="right:372.95px;top:-6.25px;font-size:8.8px;color:#000;text-align:right;letter-spacing:-0.55px;">5,504 K</div>
<div class="t" style="left:332.00px;top:-6.25px;font-size:8.8px;color:#000;letter-spacing:-0.38px;">Microsoft Windows Driver Foundation - Us...</div>
<div class="t" style="left:462.00px;top:-6.25px;font-size:8.8px;color:#000;letter-spacing:-0.38px;">Microsoft Corporation</div>
<div class="t" style="left:640.00px;top:-6.25px;font-size:8.8px;color:#000;letter-spacing:-0.38px;">Disabled</div>
<div class="a" style="left:318.6px;top:3.7px;width:372px;height:2.3px;background:#00e0e0"></div>
<div class="a" style="left:272px;top:6px;width:418px;height:471px;background:#f0f0f0;border-left:1px solid #f2b272;box-sizing:border-box"></div>
<div class="a" style="left:272px;top:6px;width:418px;height:22px;background:#ff8c00"></div>
<div class="a" style="left:273px;top:28px;width:417px;height:1px;background:#f8f8f8"></div>
<div class="a" style="left:273px;top:28px;width:1px;height:449px;background:#fafafa"></div>
<div class="a" style="left:278.5px;top:13px;line-height:0"><svg width="9" height="8" viewBox="0 0 9 8"><rect x="0" y="0" width="9" height="8" fill="#e8f0f8"/><rect x="0.5" y="0.5" width="8" height="7" fill="none" stroke="#a8c0d8"/><rect x="2" y="1.5" width="4" height="5" fill="#1a6fe0"/></svg></div>
<div class="t" style="left:291.90px;top:13.14px;font-size:10px;color:#140a00;letter-spacing:0px;-webkit-text-stroke:0.1px #140a00;transform:scaleX(0.875);transform-origin:0 0">GWIdlMon.exe:12092 Properties</div>
<div class="a" style="left:623px;top:16.5px;width:7px;height:1px;background:#5a3400"></div>
<div class="a" style="left:658px;top:14px;width:7px;height:7px;border:1px solid #5a3400;box-sizing:border-box"></div>
<div class="a" style="left:279.80px;top:33.00px;width:105.20px;height:12.50px;background:#f0f0f0;border:1px solid #e0e0e0;box-sizing:border-box;"></div><div class="t" style="left:279.80px;width:105.20px;top:36.06px;font-size:8.2px;text-align:center;letter-spacing:-0.1px">Security</div>
<div class="a" style="left:384.00px;top:33.00px;width:123.00px;height:12.50px;background:#f0f0f0;border:1px solid #e0e0e0;box-sizing:border-box;"></div><div class="t" style="left:384.00px;width:123.00px;top:36.06px;font-size:8.2px;text-align:center;letter-spacing:-0.1px">Environment</div>
<div class="a" style="left:506.00px;top:33.00px;width:97.50px;height:12.50px;background:#f0f0f0;border:1px solid #e0e0e0;box-sizing:border-box;"></div><div class="t" style="left:502.00px;width:97.50px;top:36.06px;font-size:8.2px;text-align:center;letter-spacing:-0.1px">Job</div>
<div class="a" style="left:602.50px;top:33.00px;width:102.00px;height:12.50px;background:#f0f0f0;border:1px solid #e0e0e0;box-sizing:border-box;"></div><div class="t" style="left:602.50px;width:102.00px;top:36.06px;font-size:8.2px;text-align:center;letter-spacing:-0.1px">Strings</div>
<div class="a" style="left:279.80px;top:44.00px;width:42.70px;height:13.50px;background:#f0f0f0;border:1px solid #e0e0e0;box-sizing:border-box;"></div><div class="t" style="left:279.80px;width:42.70px;top:48.06px;font-size:8.2px;text-align:center;letter-spacing:-0.1px">Image</div>
<div class="a" style="left:321.50px;top:44.00px;width:64.50px;height:13.50px;background:#f0f0f0;border:1px solid #e0e0e0;box-sizing:border-box;"></div><div class="t" style="left:321.50px;width:64.50px;top:48.06px;font-size:8.2px;text-align:center;letter-spacing:-0.1px">Performance</div>
<div class="a" style="left:385.00px;top:44.00px;width:90.50px;height:13.50px;background:#f0f0f0;border:1px solid #e0e0e0;box-sizing:border-box;"></div><div class="t" style="left:385.00px;width:90.50px;top:48.06px;font-size:8.2px;text-align:center;letter-spacing:-0.1px">Performance Graph</div>
<div class="a" style="left:474.50px;top:44.00px;width:81.50px;height:13.50px;background:#f0f0f0;border:1px solid #e0e0e0;box-sizing:border-box;"></div><div class="t" style="left:474.50px;width:81.50px;top:48.06px;font-size:8.2px;text-align:center;letter-spacing:-0.1px">Disk and Network</div>
<div class="a" style="left:555.00px;top:44.00px;width:59.00px;height:13.50px;background:#f0f0f0;border:1px solid #e0e0e0;box-sizing:border-box;"></div><div class="t" style="left:555.00px;width:59.00px;top:48.06px;font-size:8.2px;text-align:center;letter-spacing:-0.1px">GPU Graph</div>
<div class="a" style="left:662.20px;top:44.00px;width:41.30px;height:13.50px;background:#f0f0f0;border:1px solid #e0e0e0;box-sizing:border-box;"></div><div class="t" style="left:662.20px;width:41.30px;top:48.06px;font-size:8.2px;text-align:center;letter-spacing:-0.1px">TCP/IP</div>
<div class="a" style="left:279.8px;top:56.5px;width:420px;height:430px;background:#fff;border:1px solid #e4e4e4;box-sizing:border-box"></div>
<div class="a" style="left:613.50px;top:43.00px;width:49.70px;height:14.50px;background:#fff;border:1px solid #e0e0e0;box-sizing:border-box;border-bottom:none;"></div><div class="t" style="left:613.50px;width:49.70px;top:46.66px;font-size:8.2px;text-align:center;letter-spacing:-0.1px">Threads</div>
<div class="a" style="left:614.5px;top:56px;width:47.7px;height:2px;background:#fff"></div>
<div class="t" style="left:290.40px;top:62.79px;font-size:8.4px;color:#000;letter-spacing:-0.15px;">Count:</div>
<div class="t" style="left:321.30px;top:62.79px;font-size:8.4px;color:#000;letter-spacing:-0.15px;">40</div>
<div class="a" style="left:288px;top:74px;width:410px;height:273.5px;border:1px solid #c4c4c4;box-sizing:border-box;background:#fff"></div>
<div class="a" style="left:326.0px;top:75px;width:1px;height:14px;background:#e5e5e5"></div>
<div class="a" style="left:365.3px;top:75px;width:1px;height:14px;background:#e5e5e5"></div>
<div class="a" style="left:419.5px;top:75px;width:1px;height:14px;background:#e5e5e5"></div>
<div class="t" style="left:292.00px;top:78.02px;font-size:8.6px;color:#000;letter-spacing:-0.3px;">TID</div>
<div class="t" style="left:345.80px;top:78.02px;font-size:8.6px;color:#000;letter-spacing:-0.6px;">CPU</div>
<div class="t" style="left:374.30px;top:78.02px;font-size:8.6px;color:#000;letter-spacing:-0.4px;">Cycles Delta</div>
<div class="t" style="left:423.00px;top:78.02px;font-size:8.6px;color:#000;letter-spacing:-0.3px;">Start Address</div>
<div class="a" style="left:343px;top:76.2px;line-height:0"><svg width="6" height="3.5" viewBox="0 0 6 3.5"><path d="M0.5 0.5 L3 2.8 L5.5 0.5" stroke="#606060" stroke-width="0.8" fill="none"/></svg></div>
<div class="t" style="left:290.20px;top:91.96px;font-size:8.2px;color:#000;letter-spacing:-0.35px;">11428</div>
<div class="t" style="right:329.85px;top:91.96px;font-size:8.2px;color:#000;text-align:right;letter-spacing:-0.35px;">0.24</div>
<div class="t" style="right:273.65px;top:91.96px;font-size:8.2px;color:#000;text-align:right;letter-spacing:-0.35px;">28,090,254</div>
<div class="t" style="left:421.20px;top:91.96px;font-size:8.2px;color:#000;letter-spacing:-0.08px;">MSVCR120.dll!?_SetUnobservedExceptionHandler@details@Concurr...</div>
<div class="t" style="left:290.20px;top:103.01px;font-size:8.2px;color:#000;letter-spacing:-0.35px;">11980</div>
<div class="t" style="right:329.85px;top:103.01px;font-size:8.2px;color:#000;text-align:right;letter-spacing:-0.35px;">0.22</div>
<div class="t" style="right:273.65px;top:103.01px;font-size:8.2px;color:#000;text-align:right;letter-spacing:-0.35px;">26,594,644</div>
<div class="t" style="left:421.20px;top:103.01px;font-size:8.2px;color:#000;letter-spacing:-0.08px;">MSVCR120.dll!?_SetUnobservedExceptionHandler@details@Concurr...</div>
<div class="t" style="left:290.20px;top:114.06px;font-size:8.2px;color:#000;letter-spacing:-0.35px;">6432</div>
<div class="t" style="right:329.85px;top:114.06px;font-size:8.2px;color:#000;text-align:right;letter-spacing:-0.35px;">0.02</div>
<div class="t" style="right:273.65px;top:114.06px;font-size:8.2px;color:#000;text-align:right;letter-spacing:-0.35px;">2,378,691</div>
<div class="t" style="left:421.20px;top:114.06px;font-size:8.2px;color:#000;letter-spacing:-0.08px;">MSVCR120.dll!?_SetUnobservedExceptionHandler@details@Concurr...</div>
<div class="t" style="left:290.20px;top:125.11px;font-size:8.2px;color:#000;letter-spacing:-0.35px;">14580</div>
<div class="t" style="right:329.85px;top:125.11px;font-size:8.2px;color:#000;text-align:right;letter-spacing:-0.35px;">0.02</div>
<div class="t" style="right:273.65px;top:125.11px;font-size:8.2px;color:#000;text-align:right;letter-spacing:-0.35px;">2,290,374</div>
<div class="t" style="left:421.20px;top:125.11px;font-size:8.2px;color:#000;letter-spacing:-0.08px;">ntdll.dll!TpReleaseTimer+0xe0</div>
<div class="t" style="left:290.20px;top:136.16px;font-size:8.2px;color:#000;letter-spacing:-0.35px;">3700</div>
<div class="t" style="right:329.85px;top:136.16px;font-size:8.2px;color:#000;text-align:right;letter-spacing:-0.35px;">0.02</div>
<div class="t" style="right:273.65px;top:136.16px;font-size:8.2px;color:#000;text-align:right;letter-spacing:-0.35px;">2,140,677</div>
<div class="t" style="left:421.20px;top:136.16px;font-size:8.2px;color:#000;letter-spacing:-0.08px;">MSVCR120.dll!?_SetUnobservedExceptionHandler@details@Concurr...</div>
<div class="t" style="left:290.20px;top:147.21px;font-size:8.2px;color:#000;letter-spacing:-0.35px;">14884</div>
<div class="t" style="right:329.85px;top:147.21px;font-size:8.2px;color:#000;text-align:right;letter-spacing:-0.35px;">0.02</div>
<div class="t" style="right:273.65px;top:147.21px;font-size:8.2px;color:#000;text-align:right;letter-spacing:-0.35px;">1,844,815</div>
<div class="t" style="left:421.20px;top:147.21px;font-size:8.2px;color:#000;letter-spacing:-0.08px;">ntdll.dll!TpReleaseTimer+0xe0</div>
<div class="t" style="left:290.20px;top:158.26px;font-size:8.2px;color:#000;letter-spacing:-0.35px;">3692</div>
<div class="t" style="right:329.85px;top:158.26px;font-size:8.2px;color:#000;text-align:right;letter-spacing:-0.35px;">&lt;<span style="margin-left:2.2px"></span>0.01</div>
<div class="t" style="right:273.65px;top:158.26px;font-size:8.2px;color:#000;text-align:right;letter-spacing:-0.35px;">222,901</div>
<div class="t" style="left:421.20px;top:158.26px;font-size:8.2px;color:#000;letter-spacing:-0.08px;">MSVCR120.dll!?_SetUnobservedExceptionHandler@details@Concurr...</div>
<div class="t" style="left:290.20px;top:169.31px;font-size:8.2px;color:#000;letter-spacing:-0.35px;">9396</div>
<div class="t" style="right:329.85px;top:169.31px;font-size:8.2px;color:#000;text-align:right;letter-spacing:-0.35px;">&lt;<span style="margin-left:2.2px"></span>0.01</div>
<div class="t" style="right:273.65px;top:169.31px;font-size:8.2px;color:#000;text-align:right;letter-spacing:-0.35px;">99,091</div>
<div class="t" style="left:421.20px;top:169.31px;font-size:8.2px;color:#000;letter-spacing:-0.08px;">MSVCR120.dll!__get_tlsindex+0x6</div>
<div class="t" style="left:290.20px;top:180.36px;font-size:8.2px;color:#000;letter-spacing:-0.35px;">10608</div>
<div class="t" style="right:329.85px;top:180.36px;font-size:8.2px;color:#000;text-align:right;letter-spacing:-0.35px;">&lt;<span style="margin-left:2.2px"></span>0.01</div>
<div class="t" style="right:273.65px;top:180.36px;font-size:8.2px;color:#000;text-align:right;letter-spacing:-0.35px;">95,573</div>
<div class="t" style="left:421.20px;top:180.36px;font-size:8.2px;color:#000;letter-spacing:-0.08px;">GWIdlMon.exe+0x1e2a47</div>
<div class="t" style="left:290.20px;top:191.41px;font-size:8.2px;color:#000;letter-spacing:-0.35px;">11716</div>
<div class="t" style="right:329.85px;top:191.41px;font-size:8.2px;color:#000;text-align:right;letter-spacing:-0.35px;">&lt;<span style="margin-left:2.2px"></span>0.01</div>
<div class="t" style="right:273.65px;top:191.41px;font-size:8.2px;color:#000;text-align:right;letter-spacing:-0.35px;">62,281</div>
<div class="t" style="left:421.20px;top:191.41px;font-size:8.2px;color:#000;letter-spacing:-0.08px;">GWIdlMon.exe+0x1e2a47</div>
<div class="t" style="left:290.20px;top:202.46px;font-size:8.2px;color:#000;letter-spacing:-0.35px;">9344</div>
<div class="t" style="right:329.85px;top:202.46px;font-size:8.2px;color:#000;text-align:right;letter-spacing:-0.35px;">&lt;<span style="margin-left:2.2px"></span>0.01</div>
<div class="t" style="right:273.65px;top:202.46px;font-size:8.2px;color:#000;text-align:right;letter-spacing:-0.35px;">46,179</div>
<div class="t" style="left:421.20px;top:202.46px;font-size:8.2px;color:#000;letter-spacing:-0.08px;">GWIdlMon.exe+0x1e2a47</div>
<div class="t" style="left:290.20px;top:213.51px;font-size:8.2px;color:#000;letter-spacing:-0.35px;">9932</div>
<div class="t" style="right:329.85px;top:213.51px;font-size:8.2px;color:#000;text-align:right;letter-spacing:-0.35px;">&lt;<span style="margin-left:2.2px"></span>0.01</div>
<div class="t" style="right:273.65px;top:213.51px;font-size:8.2px;color:#000;text-align:right;letter-spacing:-0.35px;">44,783</div>
<div class="t" style="left:421.20px;top:213.51px;font-size:8.2px;color:#000;letter-spacing:-0.08px;">GWIdlMon.exe+0x1e2a47</div>
<div class="t" style="left:290.20px;top:224.56px;font-size:8.2px;color:#000;letter-spacing:-0.35px;">7752</div>
<div class="t" style="right:329.85px;top:224.56px;font-size:8.2px;color:#000;text-align:right;letter-spacing:-0.35px;">&lt;<span style="margin-left:2.2px"></span>0.01</div>
<div class="t" style="right:273.65px;top:224.56px;font-size:8.2px;color:#000;text-align:right;letter-spacing:-0.35px;">41,563</div>
<div class="t" style="left:421.20px;top:224.56px;font-size:8.2px;color:#000;letter-spacing:-0.08px;">GWIdlMon.exe+0x1e2a47</div>
<div class="t" style="left:290.20px;top:235.61px;font-size:8.2px;color:#000;letter-spacing:-0.35px;">10316</div>
<div class="t" style="left:421.20px;top:235.61px;font-size:8.2px;color:#000;letter-spacing:-0.08px;">GWIdlMon.exe+0x1e2a47</div>
<div class="t" style="left:290.20px;top:246.66px;font-size:8.2px;color:#000;letter-spacing:-0.35px;">10208</div>
<div class="t" style="left:421.20px;top:246.66px;font-size:8.2px;color:#000;letter-spacing:-0.08px;">GWIdlMon.exe+0x1e2a47</div>
<div class="t" style="left:290.20px;top:257.71px;font-size:8.2px;color:#000;letter-spacing:-0.35px;">5244</div>
<div class="t" style="left:421.20px;top:257.71px;font-size:8.2px;color:#000;letter-spacing:-0.08px;">GWIdlMon.exe+0x1e2a47</div>
<div class="t" style="left:290.20px;top:268.76px;font-size:8.2px;color:#000;letter-spacing:-0.35px;">2216</div>
<div class="t" style="left:421.20px;top:268.76px;font-size:8.2px;color:#000;letter-spacing:-0.08px;">MSVCR120.dll!?_SetUnobservedExceptionHandler@details@Concurr...</div>
<div class="t" style="left:290.20px;top:279.81px;font-size:8.2px;color:#000;letter-spacing:-0.35px;">6368</div>
<div class="t" style="left:421.20px;top:279.81px;font-size:8.2px;color:#000;letter-spacing:-0.08px;">ntdll.dll!TpReleaseTimer+0xe0</div>
<div class="a" style="left:289px;top:288.50px;width:392px;height:11.05px;background:#3399ff"></div>
<div class="t" style="left:290.20px;top:291.46px;font-size:8.2px;color:#fff;letter-spacing:-0.35px;">11080</div>
<div class="t" style="left:421.20px;top:291.46px;font-size:8.2px;color:#fff;letter-spacing:-0.08px;">GWIdlMon.exe+0x64a000</div>
<div class="t" style="left:290.20px;top:301.91px;font-size:8.2px;color:#000;letter-spacing:-0.35px;">9268</div>
<div class="t" style="left:421.20px;top:301.91px;font-size:8.2px;color:#000;letter-spacing:-0.08px;">GWIdlMon.exe+0x1e2a47</div>
<div class="t" style="left:290.20px;top:312.96px;font-size:8.2px;color:#000;letter-spacing:-0.35px;">11496</div>
<div class="t" style="left:421.20px;top:312.96px;font-size:8.2px;color:#000;letter-spacing:-0.08px;">GWIdlMon.exe+0x1e2a47</div>
<div class="t" style="left:290.20px;top:324.01px;font-size:8.2px;color:#000;letter-spacing:-0.35px;">11676</div>
<div class="t" style="left:421.20px;top:324.01px;font-size:8.2px;color:#000;letter-spacing:-0.08px;">GWIdlMon.exe+0x1e2a47</div>
<div class="t" style="left:290.20px;top:335.06px;font-size:8.2px;color:#000;letter-spacing:-0.35px;">11232</div>
<div class="t" style="left:421.20px;top:335.06px;font-size:8.2px;color:#000;letter-spacing:-0.08px;">GWIdlMon.exe+0x1e2a47</div>
<div class="a" style="left:682px;top:75px;width:8px;height:271.5px;background:#f0f0f0"></div>
<div class="a" style="left:682.5px;top:88px;width:8px;height:140.5px;background:#cdcdcd"></div>
<div class="a" style="left:684px;top:79px;line-height:0"><svg width="7" height="5" viewBox="0 0 7 5"><path d="M0.5 4 L3.5 1 L6.5 4" stroke="#606060" stroke-width="1" fill="none"/></svg></div>
<div class="a" style="left:684px;top:338px;line-height:0"><svg width="7" height="5" viewBox="0 0 7 5"><path d="M0.5 1 L3.5 4 L6.5 1" stroke="#606060" stroke-width="1" fill="none"/></svg></div>
<div class="a" style="left:585.00px;top:351.70px;width:53.00px;height:16.30px;background:#e3e3e3;border:1px solid #b8b8b8;box-sizing:border-box"></div><div class="t" style="left:585.00px;width:53.00px;top:355.59px;font-size:8.4px;text-align:center;letter-spacing:-0.2px">Stack</div>
<div class="a" style="left:641.00px;top:351.70px;width:53.00px;height:16.30px;background:#e3e3e3;border:1px solid #b8b8b8;box-sizing:border-box"></div><div class="t" style="left:641.00px;width:53.00px;top:355.59px;font-size:8.4px;text-align:center;letter-spacing:-0.2px">Module</div>
<div class="a" style="left:526.30px;top:463.60px;width:52.70px;height:16.40px;background:#e3e3e3;border:1px solid #b8b8b8;box-sizing:border-box"></div><div class="t" style="left:526.30px;width:52.70px;top:467.49px;font-size:8.4px;text-align:center;letter-spacing:-0.2px">Permissions</div>
<div class="a" style="left:585.00px;top:463.60px;width:53.00px;height:16.40px;background:#e3e3e3;border:1px solid #b8b8b8;box-sizing:border-box"></div><div class="t" style="left:585.00px;width:53.00px;top:467.49px;font-size:8.4px;text-align:center;letter-spacing:-0.2px">Kill</div>
<div class="a" style="left:641.00px;top:463.60px;width:53.00px;height:16.40px;background:#e3e3e3;border:1px solid #b8b8b8;box-sizing:border-box"></div><div class="t" style="left:641.00px;width:53.00px;top:467.49px;font-size:8.4px;text-align:center;letter-spacing:-0.2px">Suspend</div>
<div class="t" style="left:288.80px;top:356.60px;font-size:8.5px;color:#000;letter-spacing:-0.35px;">Thread</div>
<div class="t" style="left:363.60px;top:356.60px;font-size:8.5px;color:#000;letter-spacing:-0.35px;">11080</div>
<div class="t" style="left:288.80px;top:371.00px;font-size:8.5px;color:#000;letter-spacing:-0.35px;">Start</div>
<div class="t" style="left:363.60px;top:371.00px;font-size:8.5px;color:#000;letter-spacing:-0.35px;">5:09:16 PM&nbsp;&nbsp;&nbsp;&nbsp;2/5/2017</div>
<div class="t" style="left:288.80px;top:385.80px;font-size:8.5px;color:#000;letter-spacing:-0.35px;">State:</div>
<div class="t" style="left:363.60px;top:385.80px;font-size:8.5px;color:#000;letter-spacing:-0.35px;">Wait:WrUserRequest</div>
<div class="t" style="left:288.80px;top:400.00px;font-size:8.5px;color:#000;letter-spacing:-0.35px;">Kernel</div>
<div class="t" style="left:363.60px;top:400.00px;font-size:8.5px;color:#000;letter-spacing:-0.35px;">0:00:01.562</div>
<div class="t" style="left:288.80px;top:415.40px;font-size:8.5px;color:#000;letter-spacing:-0.35px;">User</div>
<div class="t" style="left:363.60px;top:415.40px;font-size:8.5px;color:#000;letter-spacing:-0.35px;">0:00:02.187</div>
<div class="t" style="left:288.80px;top:430.00px;font-size:8.5px;color:#000;letter-spacing:-0.35px;">Context Switches:</div>
<div class="t" style="left:363.60px;top:430.00px;font-size:8.5px;color:#000;letter-spacing:-0.35px;">515,878</div>
<div class="t" style="left:288.80px;top:445.80px;font-size:8.5px;color:#000;letter-spacing:-0.35px;">Cycles:</div>
<div class="t" style="left:363.60px;top:445.80px;font-size:8.5px;color:#000;letter-spacing:-0.35px;">11,657,682,997</div>
<div class="t" style="left:444.70px;top:386.00px;font-size:8.5px;color:#000;letter-spacing:-0.35px;">Base Priority:</div>
<div class="t" style="left:514.80px;top:386.00px;font-size:8.5px;color:#000;letter-spacing:-0.35px;">8</div>
<div class="t" style="left:444.70px;top:400.20px;font-size:8.5px;color:#000;letter-spacing:-0.35px;">Dynamic Priority:</div>
<div class="t" style="left:514.80px;top:400.20px;font-size:8.5px;color:#000;letter-spacing:-0.35px;">10</div>
<div class="t" style="left:444.70px;top:415.20px;font-size:8.5px;color:#000;letter-spacing:-0.35px;">I/O Priority:</div>
<div class="t" style="left:514.80px;top:415.20px;font-size:8.5px;color:#000;letter-spacing:-0.35px;">Normal</div>
<div class="t" style="left:444.70px;top:429.80px;font-size:8.5px;color:#000;letter-spacing:-0.35px;">Memory</div>
<div class="t" style="left:514.80px;top:429.80px;font-size:8.5px;color:#000;letter-spacing:-0.35px;">5</div>
<div class="t" style="left:444.70px;top:445.80px;font-size:8.5px;color:#000;letter-spacing:-0.35px;">Ideal</div>
<div class="t" style="left:514.80px;top:445.80px;font-size:8.5px;color:#000;letter-spacing:-0.35px;">2</div>
</body></html>
